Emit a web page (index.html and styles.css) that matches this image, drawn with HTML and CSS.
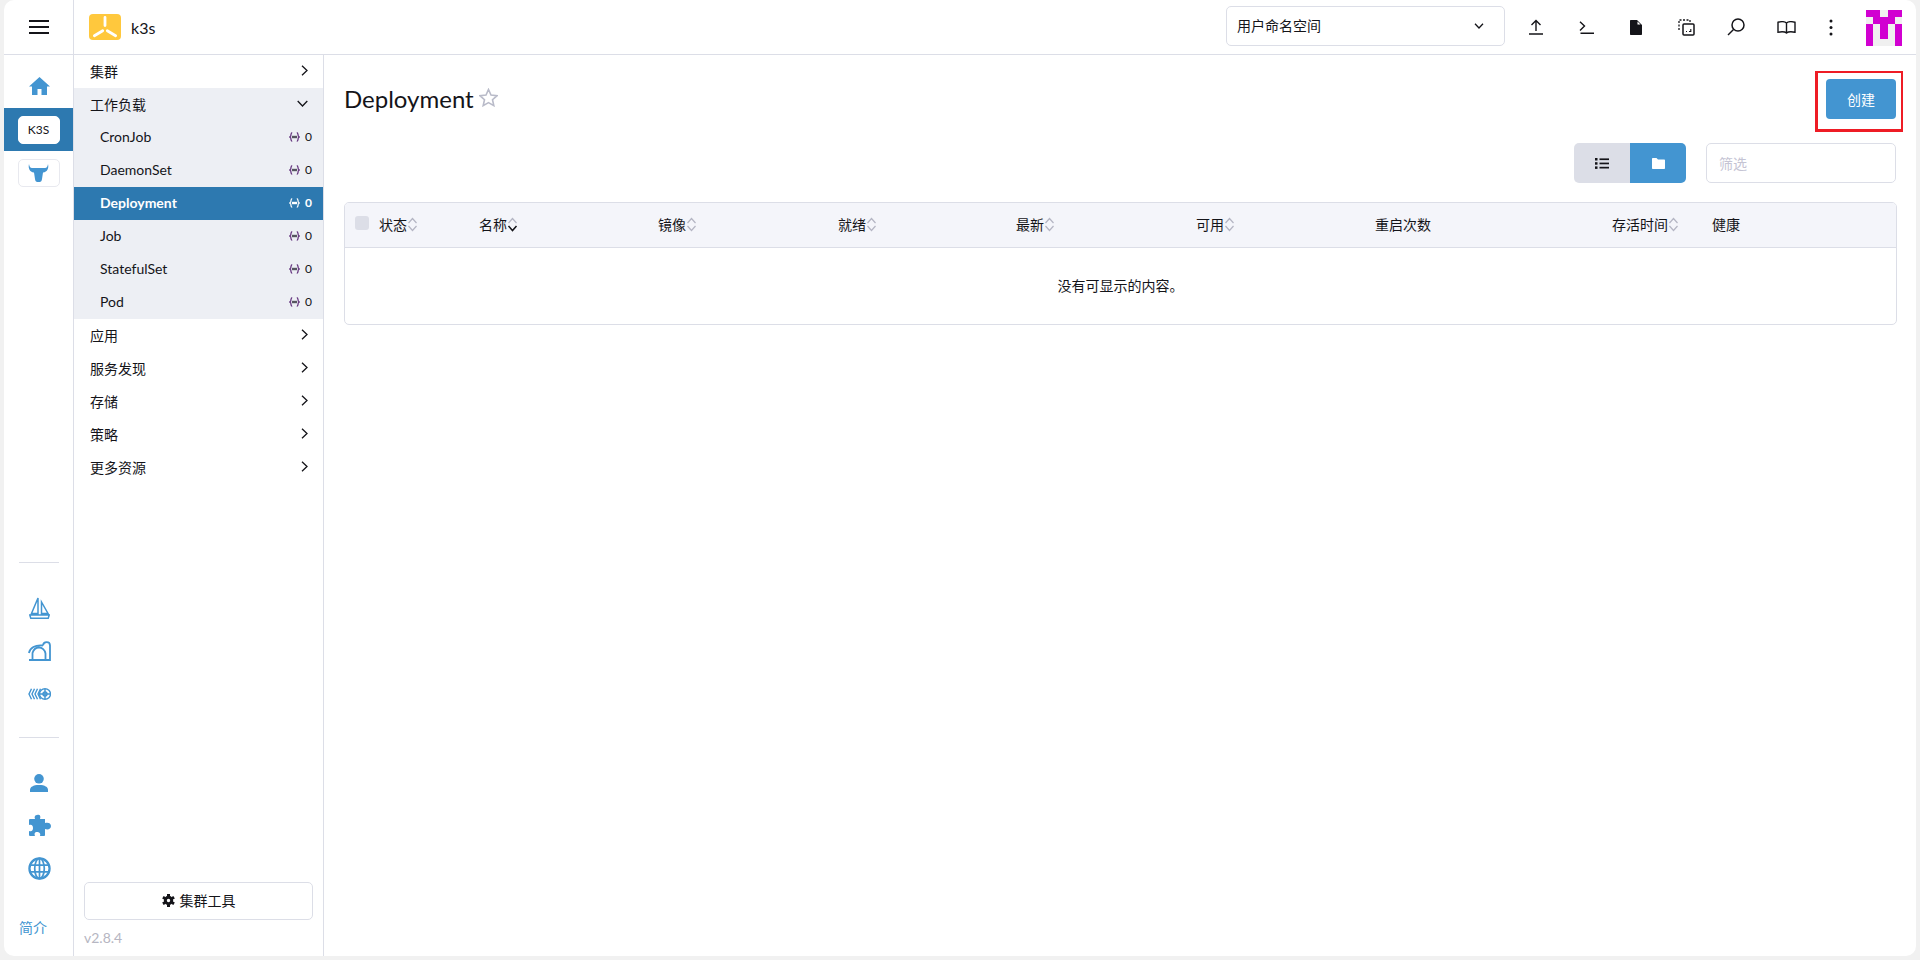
FILE: index.html
```html
<!DOCTYPE html>
<html lang="en">
<head>
    <meta charset="UTF-8">
    <meta name="viewport" content="width=device-width, initial-scale=1.0">
    <title>Deployment</title>
    <link rel="stylesheet" href="styles.css">
</head>
<body>
    <div class="frame">
        <aside class="rail">
            <div class="rail-top">
                <svg width="20" height="14" viewBox="0 0 20 14"><path d="M0 1h20M0 7h20M0 13h20" stroke="#141419" stroke-width="2"/></svg>
            </div>
            <div class="rail-item first">
                <svg width="21" height="18" viewBox="0 0 21 18"><path d="M10.5 0 0 9.5h3V18h5.500v-6h4v6H18V9.500h3z" fill="#4395d1"/></svg>
            </div>
            <div class="rail-item active"><span class="tile">K3S</span></div>
            <div class="rail-item tile-row">
                <span class="tile small">
                    <svg width="21" height="18" viewBox="0 0 21 18"><path d="M1 0C0 4 1.500 8 6 8.500L7 15c.2 2 1 3 2.500 3h2c1.500 0 2.300-1 2.500-3l1-6.500C19.500 8 21 4 20 0c-.3 2-1 4-3 4H4C2 4 1.300 2 1 0z" fill="#4395d1"/></svg>
                </span>
            </div>
            <div class="rail-lower">
                <hr class="rail-sep">
                <div class="rail-item">
                    <svg width="21" height="22" viewBox="0 0 21 22" fill="none" stroke="#4395d1" stroke-width="1.500"><path d="M9 1 2.500 16.500H9zM12.500 5v11.500H19zM.8 18h19.400l-1 3.300H1.800z"/></svg>
                </div>
                <div class="rail-item">
                    <svg width="23" height="20" viewBox="0 0 23 20" fill="none" stroke="#4395d1" stroke-width="1.800"><path d="M.9 12C2 7 7 3.500 15 4.500M4.500 19V12c1-3.500 3.500-5.500 6.500-5.500s6 2.500 6.500 6V19M1 19h21V4.500C22 .2 15.500 0 15 4.500"/></svg>
                </div>
                <div class="rail-item">
                    <svg width="23" height="12" viewBox="0 0 23 12" fill="none" stroke="#4395d1" stroke-width="1.400"><path d="M3.500.8 1 6l2.500 5.200M6.500.8 4 6l2.500 5.200M9.500.8 7 6l2.500 5.200M12.500.8 10 6l2.500 5.200"/><ellipse cx="17" cy="6" rx="5.500" ry="5.200"/><circle cx="17" cy="6" r="2"/><path d="M12 6h10M17 1v10"/></svg>
                </div>
                <hr class="rail-sep second">
                <div class="rail-item">
                    <svg width="18" height="18" viewBox="0 0 18 18"><circle cx="9" cy="4.800" r="4.800" fill="#4395d1"/><path d="M0 18v-2c0-3 3-5 9-5s9 2 9 5v2z" fill="#4395d1"/></svg>
                </div>
                <div class="rail-item">
                    <svg width="23" height="23" viewBox="0 0 23 23"><path d="M9 1c3-1 4 1 3 4h5v4c3-1 6 0 6 3s-3 4-6 3v6c0 1-1 1-1 1h-4c1-3-1-4-3-4s-3 1-2 4H2c-1 0-1-1-1-1v-4c3 1 4-1 4-3S4 10 1 11V6s0-1 1-1h5C6 3 7 1 9 1z" fill="#4395d1"/></svg>
                </div>
                <div class="rail-item">
                    <svg width="23" height="23" viewBox="0 0 24 24" fill="none" stroke="#4395d1"><circle cx="12" cy="12" r="10.500" stroke-width="2.400"/><ellipse cx="12" cy="12" rx="5" ry="10.500" stroke-width="1.800"/><path d="M2 8.500h20M2 15.500h20M12 1.500v21" stroke-width="1.800"/></svg>
                </div>
                <a class="rail-about">简介</a>
            </div>
        </aside>

        <div class="content">
            <header class="topbar">
                <div class="brand">
                    <span class="brand-logo">
                        <svg width="32" height="26" viewBox="0 0 32 26"><path d="M16 3.500v8M13.700 16.700l-8.300 5M18.300 16.700l8.300 5" stroke="#fff" stroke-width="2.800" stroke-linecap="round"/></svg>
                    </span>
                    <span class="brand-name">k3s</span>
                </div>
                <div class="ns-select">
                    <span>用户命名空间</span>
                    <svg width="10" height="6" viewBox="0 0 10 6" fill="none" stroke="#141419" stroke-width="1.300"><path d="M1 .7 5 5 9 .7"/></svg>
                </div>
                <div class="top-icons">
                    <span class="top-btn"><svg width="14" height="16" viewBox="0 0 14 16" fill="none" stroke="#141419" stroke-width="1.400"><path d="M7 12V1.500M2.500 6 7 1.500 11.500 6M0 15h14"/></svg></span>
                    <span class="top-btn"><svg width="15" height="13" viewBox="0 0 15 13" fill="none" stroke="#141419" stroke-width="1.400"><path d="M1 .7 5.500 5 1 9.500M1.500 12.300H15"/></svg></span>
                    <span class="top-btn"><svg width="12" height="15" viewBox="0 0 12 15"><path d="M0 1v13c0 .6.400 1 1 1h10c.6 0 1-.4 1-1V5L7 0H1C.4 0 0 .4 0 1z" fill="#141419"/><path d="M7.500 1.500v3h3z" fill="#fff"/></svg></span>
                    <span class="top-btn"><svg width="17" height="17" viewBox="0 0 17 17" fill="none" stroke="#141419" stroke-width="1.300"><path d="M1 11V1h11v3" stroke-dasharray="2 1.500"/><rect x="5" y="5" width="11" height="11" rx="1" stroke-width="1.500"/><path d="M11 12.500h1.800V10M8 12.500h1" stroke-width="1.100"/></svg></span>
                    <span class="top-btn"><svg width="18" height="18" viewBox="0 0 18 18" fill="none" stroke="#141419" stroke-width="1.500"><circle cx="11" cy="7" r="6"/><path d="M6.500 11.500 1 17"/></svg></span>
                    <span class="top-btn"><svg width="19" height="13" viewBox="0 0 19 13" fill="none" stroke="#141419" stroke-width="1.400"><path d="M9.500 2C8 .7 4 .5 1 1.200v10c3-.6 7-.5 8.500.8 1.500-1.300 5.500-1.400 8.500-.8v-10C15 .5 11 .7 9.500 2zM9.500 2v10"/></svg></span>
                    <span class="top-btn narrow"><svg width="4" height="17" viewBox="0 0 4 17" fill="#141419"><circle cx="2" cy="2" r="1.500"/><circle cx="2" cy="8.500" r="1.500"/><circle cx="2" cy="15" r="1.500"/></svg></span>
                </div>
                <svg class="avatar" width="36" height="36" viewBox="0 0 5 5" shape-rendering="crispEdges">
                    <rect width="5" height="5" fill="#f0f0f0"/>
                    <path d="M0 0h2v1H0zM3 0h2v1H3zM1 1h3v1H1zM0 2h1v3H0zM2 2h1v2H2zM4 2h1v3H4z" fill="#d100d1"/>
                </svg>
            </header>

            <div class="body-row">
                <nav class="side-nav">
                    <div class="nav-group"><span>集群</span><svg class="chev" width="7" height="11" viewBox="0 0 7 11"><path d="M1 .7 6 5.500 1 10.300"/></svg></div>
                    <div class="nav-open">
                        <div class="nav-group"><span>工作负载</span><svg class="chev" width="11" height="7" viewBox="0 0 11 7"><path d="M.7 1l4.800 5 4.800-5"/></svg></div>
                        <a class="nav-child"><span>CronJob</span><span class="count"><svg width="11" height="10" viewBox="0 0 11 10"><use href="#ns"/></svg>0</span></a>
                        <a class="nav-child"><span>DaemonSet</span><span class="count"><svg width="11" height="10" viewBox="0 0 11 10"><use href="#ns"/></svg>0</span></a>
                        <a class="nav-child selected"><span>Deployment</span><span class="count"><svg width="11" height="10" viewBox="0 0 11 10"><use href="#ns"/></svg>0</span></a>
                        <a class="nav-child"><span>Job</span><span class="count"><svg width="11" height="10" viewBox="0 0 11 10"><use href="#ns"/></svg>0</span></a>
                        <a class="nav-child"><span>StatefulSet</span><span class="count"><svg width="11" height="10" viewBox="0 0 11 10"><use href="#ns"/></svg>0</span></a>
                        <a class="nav-child"><span>Pod</span><span class="count"><svg width="11" height="10" viewBox="0 0 11 10"><use href="#ns"/></svg>0</span></a>
                    </div>
                    <div class="nav-group"><span>应用</span><svg class="chev" width="7" height="11" viewBox="0 0 7 11"><path d="M1 .7 6 5.500 1 10.300"/></svg></div>
                    <div class="nav-group"><span>服务发现</span><svg class="chev" width="7" height="11" viewBox="0 0 7 11"><path d="M1 .7 6 5.500 1 10.300"/></svg></div>
                    <div class="nav-group"><span>存储</span><svg class="chev" width="7" height="11" viewBox="0 0 7 11"><path d="M1 .7 6 5.500 1 10.300"/></svg></div>
                    <div class="nav-group"><span>策略</span><svg class="chev" width="7" height="11" viewBox="0 0 7 11"><path d="M1 .7 6 5.500 1 10.300"/></svg></div>
                    <div class="nav-group"><span>更多资源</span><svg class="chev" width="7" height="11" viewBox="0 0 7 11"><path d="M1 .7 6 5.500 1 10.300"/></svg></div>
                    <div class="nav-bottom">
                        <button class="tools-btn">
                            <svg width="13" height="13" viewBox="0 0 13 13" fill="none" stroke="#141419"><circle cx="6.500" cy="6.500" r="3.200" stroke-width="3"/><path d="M6.500 0v2.500M6.500 10.500V13M.9 3.300l2.200 1.200M9.900 8.500l2.200 1.200M.9 9.700l2.200-1.200M9.900 4.500l2.200-1.200" stroke-width="3"/></svg>
                            集群工具
                        </button>
                        <div class="version">v2.8.4</div>
                    </div>
                </nav>

                <main class="main">
                    <div class="page-head">
                        <h1>Deployment</h1>
                        <svg class="star" width="19" height="19" viewBox="0 0 19 19"><path d="M9.500 1.500 12 7l6 .7-4.500 4 1.300 5.900-5.300-3-5.300 3 1.300-5.900L1 7.700 7 7z" fill="none" stroke="#b9bbc9" stroke-width="1.600"/></svg>
                        <div class="create-wrap"><button class="create-btn">创建</button></div>
                    </div>
                    <div class="tools-row">
                        <div class="toggle">
                            <span class="toggle-btn">
                                <svg width="14" height="11" viewBox="0 0 14 11" fill="#141419"><rect width="2.500" height="2.500"/><rect y="4.200" width="2.500" height="2.500"/><rect y="8.400" width="2.500" height="2.500"/><rect x="4.500" y=".4" width="9.500" height="1.700"/><rect x="4.500" y="4.600" width="9.500" height="1.700"/><rect x="4.500" y="8.800" width="9.500" height="1.700"/></svg>
                            </span>
                            <span class="toggle-btn on">
                                <svg width="13" height="11" viewBox="0 0 13 11"><path d="M0 1c0-.6.400-1 1-1h3.500L6 1.500h6c.6 0 1 .4 1 1V10c0 .6-.4 1-1 1H1c-.6 0-1-.4-1-1z" fill="#fff"/></svg>
                            </span>
                        </div>
                        <input class="filter" type="text" placeholder="筛选">
                    </div>
                    <div class="table">
                        <div class="thead">
                            <span class="cb"></span>
                            <span class="th">状态<svg width="11" height="15" viewBox="0 0 11 15"><use href="#sort"/></svg></span>
                            <span class="th">名称<svg width="11" height="15" viewBox="0 0 11 15"><use href="#sort-down"/></svg></span>
                            <span class="th">镜像<svg width="11" height="15" viewBox="0 0 11 15"><use href="#sort"/></svg></span>
                            <span class="th">就绪<svg width="11" height="15" viewBox="0 0 11 15"><use href="#sort"/></svg></span>
                            <span class="th">最新<svg width="11" height="15" viewBox="0 0 11 15"><use href="#sort"/></svg></span>
                            <span class="th">可用<svg width="11" height="15" viewBox="0 0 11 15"><use href="#sort"/></svg></span>
                            <span class="th">重启次数</span>
                            <span class="th">存活时间<svg width="11" height="15" viewBox="0 0 11 15"><use href="#sort"/></svg></span>
                            <span class="th">健康</span>
                        </div>
                        <div class="empty">没有可显示的内容。</div>
                    </div>
                </main>
            </div>
        </div>
    </div>

    <svg class="defs" width="0" height="0">
        <defs>
            <g id="ns"><path d="M3.200.7C1.500.7 2.200 3.500 1.600 4.300 1.200 4.800.6 5 .6 5s.6.200 1 .7c.6.800-.1 3.600 1.600 3.600M7.800.7c1.700 0 1 2.800 1.600 3.600.4.500 1 .7 1 .7s-.6.200-1 .7c-.6.800.1 3.600-1.600 3.600" fill="none" stroke="#5d2a78" stroke-width="1.200"/><rect x="3" y="3.800" width="5" height="2.400" fill="#55555f"/></g>
            <g id="sort"><path d="M1.500 6l4-4.500 4 4.500M1.500 9l4 4.500 4-4.500" fill="none" stroke="#b4b5c3" stroke-width="1.200"/></g>
            <g id="sort-down"><path d="M1.500 6l4-4.500 4 4.500" fill="none" stroke="#b4b5c3" stroke-width="1.200"/><path d="M1.500 9l4 4.500 4-4.500" fill="none" stroke="#141419" stroke-width="1.500"/></g>
        </defs>
    </svg>
</body>
</html>
```

FILE: styles.css
```css
html, body {
    height: 100%;
}

body {
    margin: 0;
    padding: 0 4px 4px;
    box-sizing: border-box;
    background: #f1f1f1;
    color: #141419;
    font-family: Lato, "Noto Sans CJK SC", sans-serif;
    font-size: 14px;
}

.frame {
    display: flex;
    height: 100%;
    background: #fff;
    border-radius: 10px;
    overflow: hidden;
}

/* left icon rail */
.rail {
    width: 69px;
    flex: none;
    display: flex;
    flex-direction: column;
    border-right: 1px solid #dcdee7;
}

.rail-top {
    height: 54px;
    flex: none;
    display: flex;
    align-items: center;
    justify-content: center;
    border-bottom: 1px solid #dcdee7;
}

.rail-top svg,
.rail-lower .rail-item svg,
.rail-item.first svg {
    margin-left: 1px;
}

.rail-item {
    height: 43px;
    flex: none;
    display: flex;
    align-items: center;
    justify-content: center;
}

.rail-item.first {
    margin-top: 10px;
}

.rail-item.first svg {
    margin-bottom: 2px;
}

.rail-item.active {
    background: #2d79b0;
}

.tile {
    width: 42px;
    height: 28px;
    box-sizing: border-box;
    display: flex;
    align-items: center;
    justify-content: center;
    background: #fff;
    border: 1px solid #e8e9ef;
    border-radius: 5px;
    font-size: 12px;
    color: #141419;
}

.rail-item.active .tile {
    border-color: #fff;
}

.rail-lower {
    margin-top: auto;
    display: flex;
    flex-direction: column;
}

.rail-sep {
    width: 40px;
    height: 1px;
    margin: 0 auto 23px;
    background: #dcdee7;
    border: 0;
}

.rail-sep.second {
    margin-top: 22px;
    margin-bottom: 23px;
}

.rail-about {
    margin: 28px 0 18px 15px;
    color: #4395d1;
    line-height: 20px;
}

/* top bar and page */
.content {
    flex: 1;
    min-width: 0;
    display: flex;
    flex-direction: column;
}

.topbar {
    height: 54px;
    flex: none;
    display: flex;
    align-items: center;
    padding-left: 15px;
    padding-right: 14px;
    border-bottom: 1px solid #dcdee7;
}

.brand {
    display: flex;
    align-items: center;
    gap: 10px;
    margin-right: auto;
}

.brand-logo {
    width: 32px;
    height: 26px;
    background: #ffc83d;
    border-radius: 4px;
    display: flex;
}

.brand-name {
    font-size: 16px;
}

.ns-select {
    width: 279px;
    height: 40px;
    box-sizing: border-box;
    display: flex;
    align-items: center;
    justify-content: space-between;
    margin-bottom: 2px;
    padding: 0 20px 0 10px;
    border: 1px solid #dcdee7;
    border-radius: 5px;
    font-size: 14px;
}

.ns-select span {
    margin-bottom: 2px;
}

.top-icons {
    display: flex;
    align-items: center;
    margin-left: 6px;
}

.top-btn {
    width: 50px;
    height: 40px;
    display: flex;
    align-items: center;
    justify-content: center;
}

.top-btn.narrow {
    width: 40px;
}

.avatar {
    margin-left: 15px;
    margin-top: 2px;
}

.body-row {
    flex: 1;
    min-height: 0;
    display: flex;
}

.side-nav {
    width: 249px;
    flex: none;
    display: flex;
    flex-direction: column;
    border-right: 1px solid #dcdee7;
}

.nav-group {
    height: 33px;
    box-sizing: border-box;
    display: flex;
    align-items: center;
    justify-content: space-between;
    padding: 0 15px 2px 16px;
    font-size: 14px;
}

.chev {
    fill: none;
    stroke: #141419;
    stroke-width: 1.300;
}

.nav-open {
    background: #edeff4;
}

.nav-child {
    height: 33px;
    box-sizing: border-box;
    display: flex;
    align-items: center;
    justify-content: space-between;
    padding: 0 11px 2px 26px;
    font-size: 14px;
}

.nav-child.selected {
    background: #2d79b0;
    color: #fff;
    font-weight: 700;
}

.count {
    display: flex;
    align-items: center;
    gap: 5px;
    font-size: 12px;
}

.nav-child.selected .count svg {
    filter: brightness(0) invert(1);
}

.nav-bottom {
    margin-top: auto;
    padding: 0 10px 9px;
}

.tools-btn {
    width: 100%;
    height: 38px;
    display: flex;
    align-items: center;
    justify-content: center;
    gap: 5px;
    padding-bottom: 3px;
    background: #fff;
    border: 1px solid #dcdee7;
    border-radius: 5px;
    color: #141419;
    font: inherit;
    font-size: 14px;
}

.version {
    margin-top: 9px;
    color: #b6b6c2;
    line-height: 18px;
}

.main {
    flex: 1;
    min-width: 0;
    padding: 0 19px 0 20px;
}

.page-head {
    position: relative;
    height: 88px;
    display: flex;
    align-items: center;
    gap: 5px;
}

.page-head h1 {
    margin: 0 0 2px;
    font-size: 24px;
    font-weight: 400;
}

.star {
    margin-bottom: 3px;
}

/* red mark around the button */
.create-wrap {
    align-self: flex-start;
    display: flex;
    margin: 16px -6px 0 auto;
    padding: 6px 5px 10px 8px;
    border: solid #ee1c25;
    border-width: 2px 2px 3px 3px;
}

.create-btn {
    width: 70px;
    height: 40px;
    background: #4395d1;
    border: 0;
    border-radius: 4px;
    color: #fff;
    font: inherit;
}

.tools-row {
    display: flex;
    justify-content: flex-end;
    gap: 20px;
    padding-right: 1px;
}

.toggle {
    display: flex;
}

.toggle-btn {
    width: 56px;
    height: 40px;
    display: flex;
    align-items: center;
    justify-content: center;
    background: #dcdee7;
}

.toggle-btn:first-child {
    border-radius: 5px 0 0 5px;
}

.toggle-btn.on {
    background: #4395d1;
    border-radius: 0 5px 5px 0;
}

.filter {
    width: 190px;
    height: 40px;
    box-sizing: border-box;
    padding: 0 12px;
    border: 1px solid #dcdee7;
    border-radius: 5px;
    font: inherit;
    font-size: 14px;
}

.filter::placeholder {
    color: #c5c4d4;
}

.table {
    margin-top: 19px;
    border: 1px solid #dcdee7;
    border-radius: 5px;
    overflow: hidden;
}

.thead {
    display: grid;
    grid-template-columns: 29px 100px 179px 180px 178px 180px 179px 237px 100px 1fr;
    align-items: center;
    height: 44px;
    background: #f4f5fa;
    border-bottom: 1px solid #dcdee7;
    font-size: 14px;
}

.cb {
    width: 14px;
    height: 14px;
    margin-left: 10px;
    margin-bottom: 5px;
    background: #dcdee7;
    border-radius: 3px;
}

.th {
    display: flex;
    align-items: center;
    padding-left: 5px;
    padding-bottom: 2px;
}

.empty {
    height: 76px;
    box-sizing: border-box;
    padding-bottom: 2px;
    display: flex;
    align-items: center;
    justify-content: center;
    font-size: 14px;
}

.defs {
    position: absolute;
}
```
